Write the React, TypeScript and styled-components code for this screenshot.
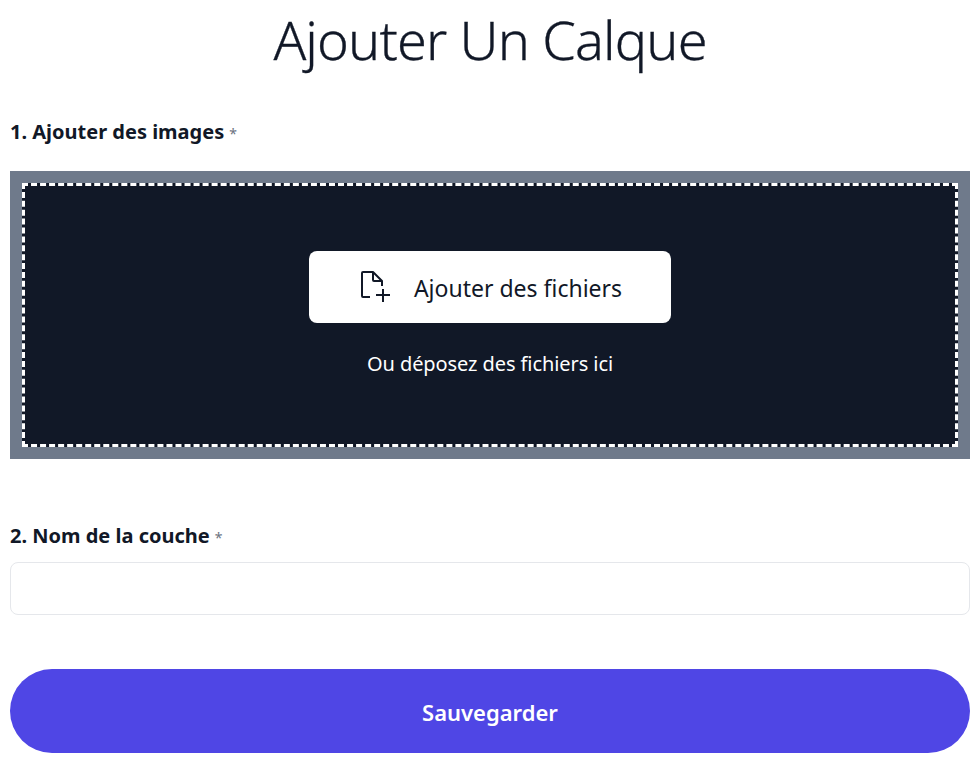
import React from 'react'
import styled, { createGlobalStyle } from 'styled-components'

const GlobalStyle = createGlobalStyle`
  body {
    margin: 0;
    background: #fff;
    font-family: "Noto Sans", "Open Sans", sans-serif;
    color: #111827;
  }
`

const Page = styled.form`
  display: flex;
  flex-direction: column;
  padding: 0 10px;
  height: 768px;
  box-sizing: border-box;
`

const Title = styled.h1`
  margin: 0;
  height: 82px;
  line-height: 78px;
  text-align: center;
  font-size: 54px;
  font-weight: 300;
  letter-spacing: -0.85px;
  -webkit-text-stroke: 0.3px #111827;
`

const Label = styled.label<{ $top: number }>`
  display: block;
  margin-top: ${p => p.$top}px;
  height: 28px;
  line-height: 28px;
  font-size: 20px;
  font-weight: 700;
`

const Star = styled.span`
  margin-left: 5px;
  font-size: 14px;
  font-weight: 400;
  color: #6b7280;
`

const DropArea = styled.div`
  margin-top: 25px;
  height: 288px;
  box-sizing: border-box;
  padding: 12px;
  background: #6f7a8b;
`

const DropInner = styled.div`
  height: 100%;
  box-sizing: border-box;
  display: flex;
  flex-direction: column;
  align-items: center;
  padding-top: 65px;
  background: #111827;
  border: 3px dashed #fff;
`

const AddButton = styled.button`
  width: 362px;
  height: 72px;
  display: flex;
  align-items: center;
  justify-content: center;
  gap: 24px;
  border: 0;
  border-radius: 8px;
  background: #fff;
  color: #111827;
  font: 400 23px "Noto Sans", sans-serif;
  padding: 2px 0 0 2px;
`

const Hint = styled.p`
  margin: 26px 0 0;
  line-height: 30px;
  font-size: 20px;
  letter-spacing: -0.08px;
  color: #fff;
`

const NameInput = styled.input`
  display: block;
  margin-top: 12px;
  width: 100%;
  height: 53px;
  box-sizing: border-box;
  border: 1px solid #e5e7eb;
  border-radius: 8px;
  background: #fff;
`

const SaveButton = styled.button`
  margin-top: 54px;
  height: 84px;
  border: 0;
  border-radius: 42px;
  padding: 2px 0 0;
  background: #4f46e5;
  color: #fff;
  font: 600 22px "Noto Sans", sans-serif;
`

const FileAddIcon = () => (
  <svg width="30" height="32" viewBox="0 0 30 32" fill="none" stroke="#111827" strokeWidth="2" style={{ marginTop: -2 }}>
    <path d="M10 26H3a1 1 0 0 1-1-1V2a1 1 0 0 1 1-1h10l9 9v5" strokeLinejoin="round" />
    <path d="M13 1v8a1 1 0 0 0 1 1h8" />
    <path d="M16 24h14M23 18v13" />
  </svg>
)

const App = () => {
  return (
    <Page onSubmit={e => e.preventDefault()}>
      <GlobalStyle />
      <Title>Ajouter Un Calque</Title>
      <Label $top={36}>1. Ajouter des images<Star>*</Star></Label>
      <DropArea>
        <DropInner>
          <AddButton type="button">
            <FileAddIcon />
            Ajouter des fichiers
          </AddButton>
          <Hint>Ou déposez des fichiers ici</Hint>
        </DropInner>
      </DropArea>
      <Label $top={63}>2. Nom de la couche<Star>*</Star></Label>
      <NameInput type="text" />
      <SaveButton type="submit">Sauvegarder</SaveButton>
    </Page>
  )
}

export default App
